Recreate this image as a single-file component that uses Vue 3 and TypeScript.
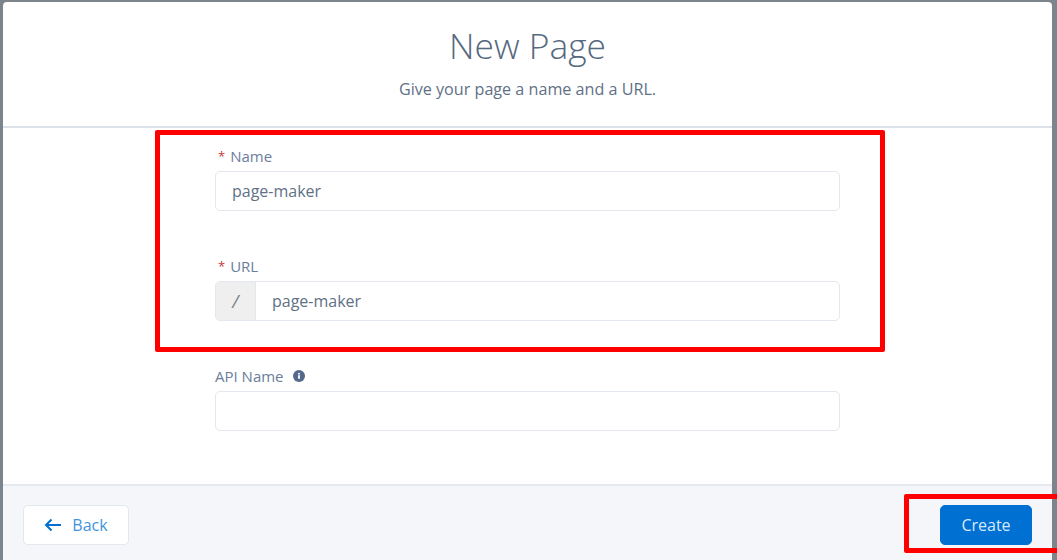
<script setup lang="ts">
interface Field {
  label: string
  required: boolean
  value: string
  prefix?: string
  info?: boolean
}
const fields: Field[] = [
  { label: 'Name', required: true, value: 'page-maker' },
  { label: 'URL', required: true, value: 'page-maker', prefix: '/' },
  { label: 'API Name', required: false, value: '', info: true },
]
</script>

<template>
  <div class="screen">
    <div class="modal">
      <header class="head">
        <h1 class="title">New Page</h1>
        <p class="sub">Give your page a name and a URL.</p>
      </header>
      <main class="body">
        <div class="form">
          <div v-for="f in fields" :key="f.label" class="field">
            <div class="label">
              <span v-if="f.required" class="req">*</span>
              <span>{{ f.label }}</span>
              <svg v-if="f.info" class="info" viewBox="0 0 12 12" width="12" height="12">
                <circle cx="6" cy="6" r="6" fill="#54698d" />
                <rect x="5.1" y="5.2" width="1.8" height="3.6" fill="#fff" />
                <rect x="5.1" y="3" width="1.8" height="1.5" fill="#fff" />
              </svg>
            </div>
            <div class="control">
              <span v-if="f.prefix" class="prefix">{{ f.prefix }}</span>
              <span class="value">{{ f.value }}</span>
            </div>
          </div>
        </div>
      </main>
      <footer class="foot">
        <button class="btn back">
          <svg viewBox="0 0 18 14" width="18" height="14" class="arrow">
            <path d="M17 7H2M7.5 1.5 2 7l5.5 5.5" fill="none" stroke="#0070d2" stroke-width="2" />
          </svg>
          <span>Back</span>
        </button>
        <button class="btn create">Create</button>
      </footer>
    </div>
    <div class="mark mark-form"></div>
    <div class="mark mark-create"></div>
  </div>
</template>

<style>
html, body { margin: 0; padding: 0; }
</style>

<style scoped>
.screen {
  position: relative;
  width: 1057px;
  height: 560px;
  overflow: hidden;
  background: #7c858c;
  padding: 2px 5px 0 3px;
  box-sizing: border-box;
  font-family: "Open Sans", "Liberation Sans", sans-serif;
  color: #54698d;
}
.modal {
  height: 558px;
  background: #fff;
  border-radius: 4px 4px 0 0;
  display: flex;
  flex-direction: column;
}
.head {
  height: 126px;
  flex: none;
  box-sizing: border-box;
  border-bottom: 2px solid #dde2ea;
  text-align: center;
  padding-top: 21px;
}
.title {
  margin: 0;
  font-size: 35.4px;
  line-height: 44px;
  font-weight: 300;
  color: #56697f;
}
.sub {
  margin: 11px 0 0;
  font-size: 16.15px;
  line-height: 22px;
  color: #5f7186;
}
.body {
  flex: 1;
  display: flex;
  justify-content: center;
  padding-top: 18px;
}
.form {
  width: 625px;
  display: flex;
  flex-direction: column;
  gap: 44px;
}
.field {
  height: 66px;
}
.label {
  height: 25px;
  display: flex;
  align-items: center;
  gap: 5px;
  font-size: 15px;
  line-height: 20px;
  color: #6b7d9c;
  padding-bottom: 5px;
  box-sizing: border-box;
}
.req {
  color: #c23934;
  margin-left: 3px;
  font-size: 13px;
}
.info {
  margin-left: 4px;
}
.control {
  height: 40px;
  box-sizing: border-box;
  border: 1px solid #e3e7ee;
  border-radius: 5px;
  display: flex;
  align-items: center;
  background: #fff;
  overflow: hidden;
}
.value {
  padding-left: 16px;
  font-size: 16px;
  color: #5f7186;
}
.prefix {
  width: 39px;
  height: 100%;
  flex: none;
  display: flex;
  align-items: center;
  justify-content: center;
  background: #efefef;
  border-right: 1px solid #e3e7ee;
  color: #7d7f85;
  font-size: 18px;
  font-style: italic;
}
.foot {
  height: 76px;
  flex: none;
  box-sizing: border-box;
  border-top: 2px solid #e6e9f0;
  background: #f4f6f9;
  display: flex;
  align-items: center;
  justify-content: space-between;
  padding: 3px 20px 0;
}
.btn {
  height: 40px;
  box-sizing: border-box;
  border-radius: 5px;
  font-family: inherit;
  font-size: 16px;
  display: flex;
  align-items: center;
  justify-content: center;
  padding: 0;
}
.back {
  width: 106px;
  gap: 10px;
  background: #fff;
  border: 1px solid #e3e7ee;
  color: #3f94e0;
}
.create {
  width: 92px;
  background: #0070d2;
  border: 1px solid #0070d2;
  color: #d8eafa;
}
.mark {
  position: absolute;
  box-sizing: border-box;
  border: 5px solid #fe0000;
  border-radius: 2px;
}
.mark-form {
  left: 155px;
  top: 130px;
  width: 730px;
  height: 222px;
}
.mark-create {
  left: 904px;
  top: 494px;
  width: 170px;
  height: 59px;
}
</style>
